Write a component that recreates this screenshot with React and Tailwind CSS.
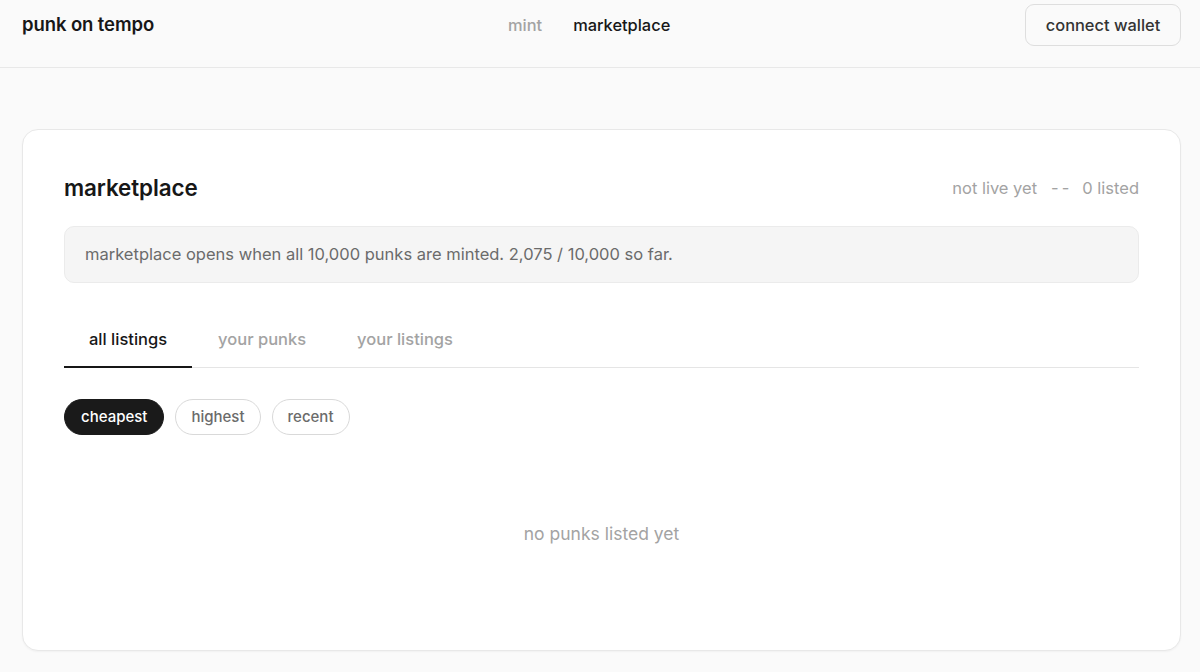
import React from "react";

export default function App() {
  return (
    <div className="min-h-screen bg-[#fafafa] text-[#171717]" style={{ fontFamily: "Inter, 'Noto Sans', sans-serif" }}>
      <header className="h-[68px] border-b border-[#e8e8e8]">
        <div className="flex items-center justify-between pl-[22px] pr-[19px] pt-1 h-[46px] relative">
          <div className="text-[18.5px] font-semibold tracking-[-0.1px] text-[#171717] pb-[1px]">punk on tempo</div>
          <nav className="absolute left-[508px] top-[4px] h-[42px] flex items-center gap-[31px] text-[16.4px] font-medium">
            <span className="text-[#a3a3a3]">mint</span>
            <span className="text-[#171717]">marketplace</span>
          </nav>
          <button className="h-[42px] w-[156px] rounded-[9px] border border-[#dedede] bg-[#fafafa] text-[16.4px] font-medium text-[#333]">
            connect wallet
          </button>
        </div>
      </header>

      <main className="pl-[22px] pr-[19px] pt-[61px] pb-[22px]">
        <section className="rounded-[16px] border border-[#e8e8e8] bg-white shadow-[0_1px_2px_rgba(0,0,0,0.04)] px-[41px] pt-[40px] pb-[41px]">
          <div className="flex items-center justify-between h-[36px]">
            <h1 className="text-[22.4px] font-semibold tracking-[-0.1px] text-[#171717]">marketplace</h1>
            <div className="flex items-center text-[16.5px] text-[#a3a3a3]">
              <span>not live yet</span>
              <span className="ml-[14px] tracking-[3px]">--</span>
              <span className="ml-[10px]">0 listed</span>
            </div>
          </div>

          <div className="mt-[20px] h-[57px] rounded-[10px] border border-[#ebebeb] bg-[#f5f5f5] px-[20px] flex items-center text-[16.5px] text-[#6b6b6b]">
            marketplace opens when all 10,000 punks are minted. 2,075 / 10,000 so far.
          </div>

          <div className="mt-[29px] flex border-b border-[#e5e5e5] leading-[24px]">
            <div className="px-[25px] pt-[15px] pb-[15px] text-[16.5px] font-medium text-[#171717] border-b-2 border-[#171717] -mb-px">all listings</div>
            <div className="pl-[26px] pr-[25px] pt-[15px] pb-[15px] text-[16.5px] font-medium text-[#a3a3a3]">your punks</div>
            <div className="pl-[26px] pr-[25px] pt-[15px] pb-[15px] text-[16.5px] font-medium text-[#a3a3a3]">your listings</div>
          </div>

          <div className="mt-[31px] flex gap-[11px]">
            <button className="h-[36px] px-[16px] rounded-full bg-[#1a1a1a] text-white text-[15px] font-medium border border-[#1a1a1a]">cheapest</button>
            <button className="h-[36px] px-[15px] rounded-full bg-white text-[#6b6b6b] text-[15px] font-medium border border-[#d9d9d9]">highest</button>
            <button className="h-[36px] px-[15px] rounded-full bg-white text-[#6b6b6b] text-[15px] font-medium border border-[#d9d9d9]">recent</button>
          </div>

          <div className="mt-[24px] h-[150px] flex items-center justify-center text-[17.5px] text-[#a3a3a3]">
            no punks listed yet
          </div>
        </section>
      </main>
    </div>
  );
}
